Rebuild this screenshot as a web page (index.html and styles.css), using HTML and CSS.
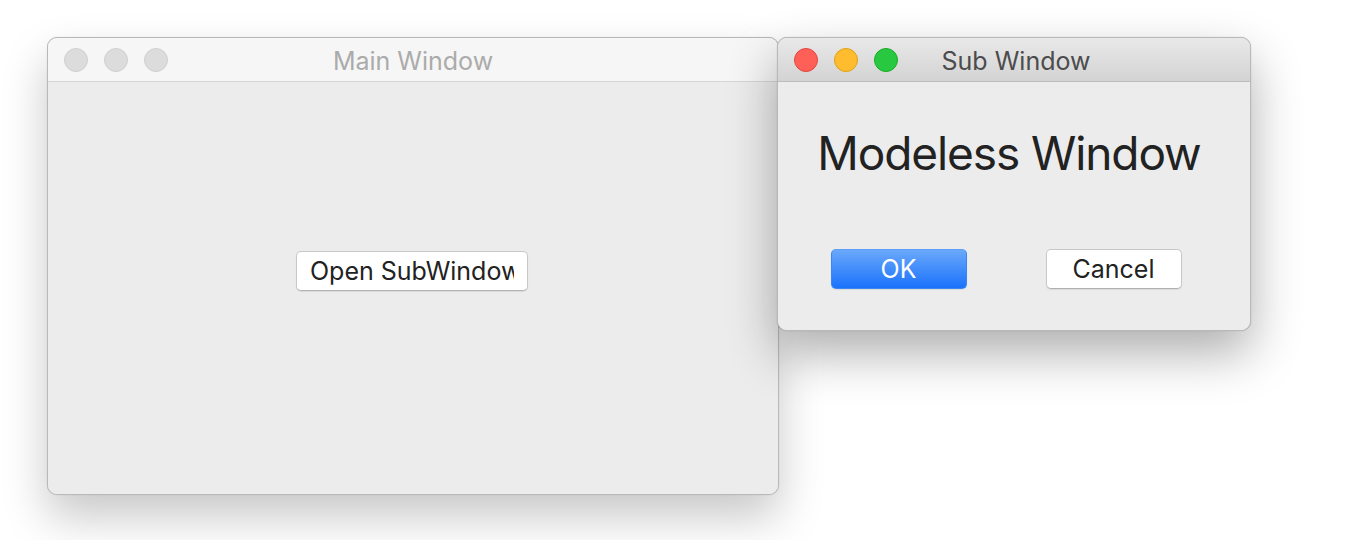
FILE: index.html
```html
<!DOCTYPE html>
<html>
<head>
<meta charset="utf-8">
<link rel="stylesheet" href="styles.css">
</head>
<body>
<div class="desktop">
  <div class="window main">
    <div class="titlebar inactive">
      <div class="lights">
        <span class="light"></span><span class="light"></span><span class="light"></span>
      </div>
      <div class="title">Main Window</div>
    </div>
    <div class="content main-content">
      <button class="btn open"><span class="clip">Open SubWindow</span></button>
    </div>
  </div>
  <div class="window sub">
    <div class="titlebar active">
      <div class="lights">
        <span class="light red"></span><span class="light yellow"></span><span class="light green"></span>
      </div>
      <div class="title">Sub Window</div>
    </div>
    <div class="content sub-content">
      <div class="heading">Modeless Window</div>
      <div class="actions">
        <button class="btn primary">OK</button>
        <button class="btn">Cancel</button>
      </div>
    </div>
  </div>
</div>
</body>
</html>
```
FILE: styles.css
```css
html, body {
  margin: 0;
  padding: 0;
  background: #ffffff;
  width: 1366px;
  height: 540px;
  overflow: hidden;
}
body {
  font-family: Inter, "Liberation Sans", sans-serif;
}
.desktop {
  display: flex;
  align-items: flex-start;
  padding: 37px 0 0 47px;
}
.window {
  box-sizing: border-box;
  border: 1px solid #b9b9b9;
  border-radius: 10px;
  overflow: hidden;
  display: flex;
  flex-direction: column;
  background: #ececec;
  box-shadow: 0 22px 45px rgba(0,0,0,0.22), 0 0 1px rgba(0,0,0,0.2);
}
.main {
  width: 732px;
  height: 458px;
  position: relative;
  z-index: 1;
}
.sub {
  width: 474px;
  height: 294px;
  margin-left: -2px;
  position: relative;
  z-index: 2;
  box-shadow: 0 22px 50px rgba(0,0,0,0.32), 0 0 1px rgba(0,0,0,0.3);
}
.titlebar {
  height: 43px;
  flex: none;
  display: flex;
  align-items: center;
  position: relative;
  border-bottom: 1px solid #cfcfcf;
}
.titlebar.inactive {
  background: #f6f6f6;
  border-bottom-color: #d6d6d6;
}
.titlebar.active {
  background: linear-gradient(#e9e9e9, #d3d3d3);
  border-bottom-color: #bdbdbd;
}
.lights {
  display: flex;
  gap: 16px;
  padding-left: 16px;
  position: relative;
  z-index: 1;
}
.light {
  box-sizing: border-box;
  width: 24px;
  height: 24px;
  border-radius: 50%;
  background: #dcdcdc;
  border: 1px solid #d0d0d0;
}
.light.red { background: #fe5f57; border-color: #e2463f; }
.light.yellow { background: #febc2e; border-color: #e1a116; }
.light.green { background: #28c840; border-color: #1aab29; }
.title {
  position: absolute;
  left: 0;
  right: 0;
  text-align: center;
  font-size: 25px;
  line-height: 43px;
  top: 2px;
}
.inactive .title { color: #ababab; }
.active .title { color: #4c4c4c; padding-left: 4px; }
.content {
  flex: 1;
  background: #ececec;
}
.main-content {
  display: flex;
  justify-content: center;
  padding-top: 169px;
  padding-right: 2px;
  box-sizing: border-box;
  align-items: flex-start;
}
.btn {
  box-sizing: border-box;
  height: 40px;
  width: 136px;
  font-family: Inter, "Liberation Sans", sans-serif;
  font-size: 25px;
  color: #222;
  background: #fff;
  border: 1px solid #c8c8c8;
  border-bottom-color: #b0b0b0;
  border-radius: 5px;
  box-shadow: 0 1px 1px rgba(0,0,0,0.08);
  padding: 0;
}
.btn.open {
  width: 232px;
  height: 40px;
  padding: 0 13px 0 13px;
  text-align: left;
}
.clip {
  display: block;
  white-space: nowrap;
  overflow: hidden;
}
.sub-content {
  display: flex;
  flex-direction: column;
  align-items: center;
}
.heading {
  font-size: 46px;
  letter-spacing: -1.1px;
  color: #222;
  margin-top: 39px;
  line-height: 64px;
  margin-left: -10px;
}
.actions {
  display: flex;
  gap: 79px;
  margin-top: 64px;
  margin-left: -16px;
}
.btn.primary {
  color: #fff;
  background: linear-gradient(#6aa8fb, #1a72fb);
  border: 1px solid #3b85f5;
  border-top-color: #5d9df7;
}
```
